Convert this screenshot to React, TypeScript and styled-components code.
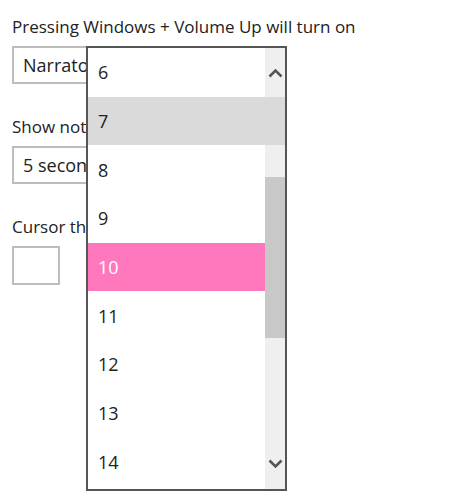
import React from 'react';
import styled, { createGlobalStyle } from 'styled-components';

const Global = createGlobalStyle`
  html, body { margin: 0; padding: 0; background: #ffffff; }
  body { font-family: "Open Sans", "Noto Sans", sans-serif; color: #222222; }
`;

const Page = styled.div`
  position: relative;
  width: 450px;
  height: 504px;
  overflow: hidden;
  box-sizing: border-box;
  padding: 15px 0 0 12px;
  display: flex;
  flex-direction: column;
`;

const Section = styled.div`
  display: flex;
  flex-direction: column;
  gap: 7px;
  margin-bottom: 31px;
`;

const Label = styled.div`
  font-size: 17px;
  line-height: 24px;
  color: #222222;
  white-space: nowrap;
`;

const Combo = styled.div`
  width: 250px;
  height: 38px;
  box-sizing: border-box;
  border: 2px solid #bdbdbd;
  padding-left: 9px;
  display: flex;
  align-items: center;
  font-size: 18px;
  color: #222222;
  white-space: nowrap;
  overflow: hidden;
`;

const Swatch = styled.div`
  width: 48px;
  height: 39px;
  box-sizing: border-box;
  border: 2px solid #bdbdbd;
  background: #ffffff;
`;

const Dropdown = styled.div`
  position: absolute;
  left: 86px;
  top: 46px;
  width: 201px;
  height: 445px;
  box-sizing: border-box;
  border: 2px solid #555555;
  background: #ffffff;
  display: grid;
  grid-template-columns: 1fr 20px;
  overflow: hidden;
`;

const List = styled.div`
  display: flex;
  flex-direction: column;
`;

const Row = styled.div<{ $state?: 'hover' | 'selected' }>`
  position: relative;
  height: 48.67px;
  flex: none;
  display: flex;
  align-items: center;
  padding-left: 10px;
  font-size: 18px;
  color: ${(p) => (p.$state === 'selected' ? '#ffffff' : '#222222')};
  background: ${(p) =>
    p.$state === 'selected' ? '#ff78bd' : p.$state === 'hover' ? '#dadada' : '#ffffff'};
  ${(p) =>
    p.$state === 'hover'
      ? `&::after { content: ''; position: absolute; left: 100%; top: 0; bottom: 0; width: 20px; background: #dadada; z-index: 2; }`
      : ''}
`;

const ScrollBar = styled.div`
  position: relative;
  z-index: 1;
  background: #efefef;
  display: flex;
  flex-direction: column;
`;

const ArrowButton = styled.div`
  height: 50px;
  flex: none;
  display: flex;
  align-items: center;
  justify-content: center;
`;

const Track = styled.div`
  flex: 1;
  display: flex;
  flex-direction: column;
`;

const Thumb = styled.div`
  margin-top: 79px;
  height: 161px;
  background: #c8c8c8;
`;

const Chevron = ({ up }: { up?: boolean }) => (
  <svg width="15" height="10" viewBox="0 0 15 10">
    <polyline
      points={up ? '1.5,8.5 7.5,2.5 13.5,8.5' : '1.5,1.5 7.5,7.5 13.5,1.5'}
      fill="none"
      stroke="#555555"
      strokeWidth="2.6"
    />
  </svg>
);

const numbers = [6, 7, 8, 9, 10, 11, 12, 13, 14];

export default function App() {
  return (
    <>
      <Global />
      <Page>
        <Section>
          <Label>Pressing Windows + Volume Up will turn on</Label>
          <Combo>Narrator</Combo>
        </Section>
        <Section>
          <Label>Show notifications for</Label>
          <Combo>5 seconds</Combo>
        </Section>
        <Section>
          <Label>Cursor thickness</Label>
          <Swatch />
        </Section>
        <Dropdown>
          <List>
            {numbers.map((n) => (
              <Row key={n} $state={n === 7 ? 'hover' : n === 10 ? 'selected' : undefined}>
                {n}
              </Row>
            ))}
          </List>
          <ScrollBar>
            <ArrowButton>
              <Chevron up />
            </ArrowButton>
            <Track>
              <Thumb />
            </Track>
            <ArrowButton>
              <Chevron />
            </ArrowButton>
          </ScrollBar>
        </Dropdown>
      </Page>
    </>
  );
}
